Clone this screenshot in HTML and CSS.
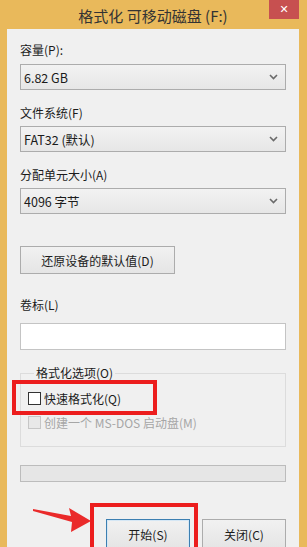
FILE: index.html
```html
<!DOCTYPE html>
<html>
<head>
  <meta charset="UTF-8">
  <title>格式化 可移动磁盘 (F:)</title>
  <link rel="stylesheet" href="styles.css">
</head>
<body>
  <div class="window">
    <div class="titlebar">
      <span class="title">格式化 可移动磁盘 (F:)</span>
      <span class="close">✕</span>
    </div>
    <div class="client">
      <div class="label">容量(P):</div>
      <div class="select"><span>6.82 GB</span><svg class="chev" width="9" height="6" viewBox="0 0 9 6"><path d="M1 1 L4.5 4.5 L8 1" fill="none" stroke="#6a6a6a" stroke-width="1.6"/></svg></div>

      <div class="label gap">文件系统(F)</div>
      <div class="select"><span>FAT32 (默认)</span><svg class="chev" width="9" height="6" viewBox="0 0 9 6"><path d="M1 1 L4.5 4.5 L8 1" fill="none" stroke="#6a6a6a" stroke-width="1.6"/></svg></div>

      <div class="label gap">分配单元大小(A)</div>
      <div class="select"><span>4096 字节</span><svg class="chev" width="9" height="6" viewBox="0 0 9 6"><path d="M1 1 L4.5 4.5 L8 1" fill="none" stroke="#6a6a6a" stroke-width="1.6"/></svg></div>

      <div class="btn restore">还原设备的默认值(D)</div>

      <div class="label volume">卷标(L)</div>
      <div class="textbox"></div>

      <fieldset class="group">
        <legend>格式化选项(O)</legend>
        <div class="check"><span class="box"></span>快速格式化(Q)</div>
        <div class="check disabled"><span class="box"></span>创建一个 MS-DOS 启动盘(M)</div>
      </fieldset>

      <div class="progress"></div>

      <div class="actions">
        <div class="btn default">开始(S)</div>
        <div class="btn">关闭(C)</div>
      </div>
    </div>

    <!-- annotation marks drawn over the dialog -->
    <div class="mark mark-quick"></div>
    <div class="mark mark-start"></div>
    <svg class="arrow" width="70" height="30" viewBox="0 0 70 30">
      <path d="M2 4 L40 11 L38 3 L60 16 L40 27 L41 17 L2 6 Z" fill="#ea2a2a"/>
    </svg>
  </div>
</body>
</html>
```

FILE: styles.css
```css
* {
  box-sizing: border-box;
}

html,
body{
  margin: 0;
  height: 100%;
  overflow: hidden;
}

body{
  font-family: "Noto Sans CJK SC", "Liberation Sans", sans-serif;
  font-size: 12px;
  color: #1b1b1b;
  background: #e9b95b;
}

.window{
  position: relative;
  height: 100%;
  padding: 0 8px 0 7px;
  background: #e9b95b;
}

.titlebar{
  height: 29px;
  display: flex;
  align-items: center;
  justify-content: center;
}

.title{
  font-size: 15px;
  color: #333;
  margin-left: 0;
  margin-top: 1px;
}

.close{
  position: absolute;
  top: 0;
  right: 8px;
  width: 30px;
  height: 19px;
  background: #c75050;
  color: #fff;
  font-size: 11px;
  font-family: "DejaVu Sans", sans-serif;
  display: flex;
  align-items: center;
  justify-content: center;
}

.client{
  background: #f0f0f0;
  height: calc(100% - 29px);
  padding: 13px 13px 0;
}

.label{
  height: 16px;
  line-height: 16px;
  margin-bottom: 6px;
}

.label.gap{
  margin-top: 15px;
  margin-bottom: 5px;
}

.select{
  height: 26px;
  border: 1px solid #acacac;
  background: linear-gradient(#f2f2f2, #e6e6e6);
  display: flex;
  align-items: center;
  justify-content: space-between;
  padding: 0 7px 0 3px;
}

.select span{
  font-size: 12.5px;
}

.btn{
  height: 28px;
  border: 1px solid #acacac;
  background: linear-gradient(#f1f1f1, #e5e5e5);
  display: flex;
  align-items: center;
  justify-content: center;
}

.restore{
  width: 155px;
  margin-top: 32px;
}

.label.volume{
  margin-top: 23px;
  margin-bottom: 10px;
}

.textbox{
  height: 27px;
  background: #fff;
  border: 1px solid #c4c4c4;
}

.group{
  margin: 15px 0 0;
  padding: 8px 0 0 7px;
  height: 82px;
  border: 1px solid #dcdcdc;
}

.group legend{
  padding: 0 2px;
  margin-left: 6px;
  line-height: 16px;
}

.check{
  display: flex;
  align-items: center;
  height: 18px;
  margin-bottom: 6px;
}

.check .box{
  width: 13px;
  height: 13px;
  border: 1px solid #333;
  background: #fff;
  margin-right: 3px;
}

.check.disabled{
  color: #a6a6a6;
}

.check.disabled .box{
  border-color: #c6c6c6;
  background: #e8e8e8;
}

.progress{
  margin-top: 18px;
  height: 17px;
  border: 1px solid #bcbcbc;
  background: #e6e6e6;
}

.actions{
  display: flex;
  justify-content: flex-end;
  gap: 12px;
  margin-top: 37px;
}

.actions .btn{
  width: 84px;
  height: 30px;
}

.actions .default{
  border-color: #3c7fb1;
  box-shadow: inset 0 0 0 1px #d5e7f5;
}

.mark{
  position: absolute;
  border: 4px solid #ec1d1d;
}

.mark-quick{
  left: 12px;
  top: 380px;
  width: 145px;
  height: 35px;
}

.mark-start{
  left: 90px;
  top: 503px;
  width: 108px;
  height: 60px;
}

.arrow{
  position: absolute;
  left: 31px;
  top: 505px;
}
```
